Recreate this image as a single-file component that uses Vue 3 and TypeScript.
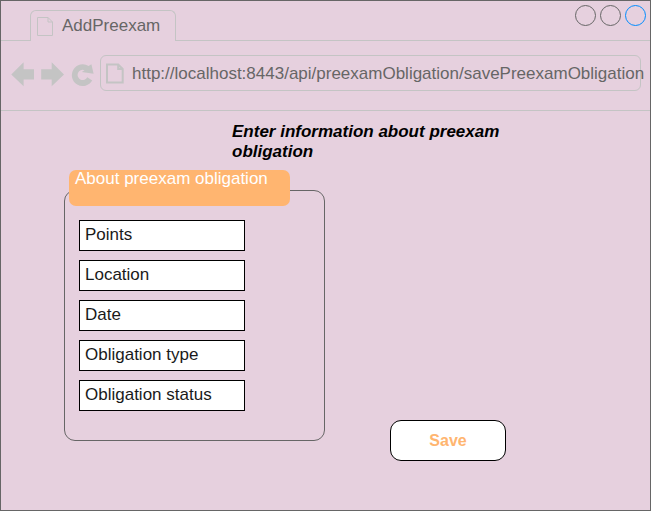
<script setup lang="ts">
const fields: string[] = ['Points', 'Location', 'Date', 'Obligation type', 'Obligation status']
const controls: string[] = ['#666666', '#666666', '#008cff']
</script>

<template>
  <div class="window">
    <header class="tabbar">
      <div class="edge"></div>
      <div class="tab">
        <svg class="page-icon" width="18" height="21" viewBox="0 0 18 21">
          <path d="M1.5 1.5H12L16.5 6V19.5H1.5Z M12 1.5V6H16.5" />
        </svg>
        <span>AddPreexam</span>
      </div>
      <div class="rest">
        <svg width="73" height="24" viewBox="0 0 73 24">
          <circle v-for="(color, i) in controls" :key="i" :cx="11.5 + i * 25" cy="11.5" r="10" :stroke="color" fill="none" />
        </svg>
      </div>
    </header>

    <nav class="toolbar">
      <svg class="nav-icons" width="84" height="28" viewBox="0 0 84 28">
        <path d="M0.3 13.5L12.6 1.3V8.2H23V18.4H12.6V25.2Z" />
        <path d="M53 13.5L40.7 1.3V8.2H30.2V18.4H40.7V25.2Z" />
        <path d="M82.6 12.8L70.8 11L73.5 9.2A5.1 5.1 0 1 0 76.3 16.2L81.2 19.5A10.9 10.9 0 1 1 77.6 4.9L80.4 3.2Z" />
      </svg>
      <div class="address">
        <svg class="page-icon bold" width="20" height="22" viewBox="0 0 20 22">
          <path d="M2 1.5H13.2L17.7 6V19.5H2Z M13.2 1.5V6H17.7" />
        </svg>
        <span>http://localhost:8443/api/preexamObligation/savePreexamObligation</span>
      </div>
    </nav>

    <main class="content">
      <h1>Enter information about preexam obligation</h1>
      <div class="form">
        <section class="group">
          <h2>About preexam obligation</h2>
          <div class="fields">
            <div v-for="field in fields" :key="field" class="field">{{ field }}</div>
          </div>
        </section>
        <button type="button" class="save">Save</button>
      </div>
    </main>
  </div>
</template>

<style>
body {
  margin: 0;
}
</style>

<style scoped>
.window {
  box-sizing: border-box;
  width: 651px;
  height: 511px;
  border: 1px solid #666666;
  background: #e6d0de;
  overflow: hidden;
  font-family: "Liberation Sans", Arial, sans-serif;
  font-size: 17px;
  line-height: 20px;
  color: #666666;
}
svg {
  display: block;
  flex: none;
}
.tabbar {
  display: flex;
  height: 40px;
}
.edge,
.rest {
  box-sizing: border-box;
  border-bottom: 1px solid #c4c4c4;
}
.edge {
  width: 30px;
  margin-right: -1px;
}
.rest {
  flex: 1;
  display: flex;
  justify-content: flex-end;
  padding: 3px 3px 0 0;
}
.tab {
  box-sizing: border-box;
  display: flex;
  width: 146px;
  margin-top: 9px;
  padding: 5px 0 0 5px;
  border: 1px solid #c4c4c4;
  border-bottom: 0;
  border-radius: 6px 6px 0 0;
}
.tab span {
  margin-left: 8px;
}
.page-icon {
  fill: none;
  stroke: #c4c4c4;
}
.bold {
  stroke-width: 2;
}
.toolbar {
  box-sizing: border-box;
  display: flex;
  height: 70px;
  padding: 14px 9px 0 10px;
  border-bottom: 1px solid #c4c4c4;
}
.nav-icons {
  margin-top: 6px;
  fill: #c4c4c4;
}
.address {
  box-sizing: border-box;
  display: flex;
  width: 541px;
  height: 36px;
  margin-left: 5px;
  padding: 7px 0 0 4px;
  border: 1px solid #c4c4c4;
  border-radius: 6px;
  white-space: nowrap;
}
.address span {
  margin: 1px 0 0 7px;
}
.content {
  padding: 11px 0 0 63px;
}
h1 {
  width: 300px;
  margin: 0 0 0 168px;
  color: #000000;
  font-size: 17px;
  font-style: italic;
  line-height: 20px;
}
.form {
  display: flex;
  align-items: flex-end;
  margin-top: 28px;
}
.group {
  box-sizing: border-box;
  width: 261px;
  height: 251px;
  border: 1px solid #666666;
  border-radius: 11px;
}
h2 {
  box-sizing: border-box;
  width: 221px;
  height: 36px;
  margin: -21px 0 0 4px;
  padding-left: 6px;
  border-radius: 7px;
  background: #ffb570;
  color: #ffffff;
  font-size: 17px;
  font-weight: 400;
  line-height: 18px;
}
.fields {
  display: flex;
  flex-direction: column;
  gap: 9px;
  padding: 14px 0 0 14px;
}
.field {
  box-sizing: border-box;
  width: 166px;
  height: 31px;
  padding: 4px 0 0 5px;
  border: 1px solid #000000;
  background: #ffffff;
  color: #1a1a1a;
}
.save {
  box-sizing: border-box;
  width: 116px;
  height: 41px;
  margin: 0 0 -20px 65px;
  padding: 0;
  border: 1px solid #000000;
  border-radius: 11px;
  background: #ffffff;
  color: #ffb570;
  font: bold 16px "Liberation Sans", Arial, sans-serif;
}
</style>
